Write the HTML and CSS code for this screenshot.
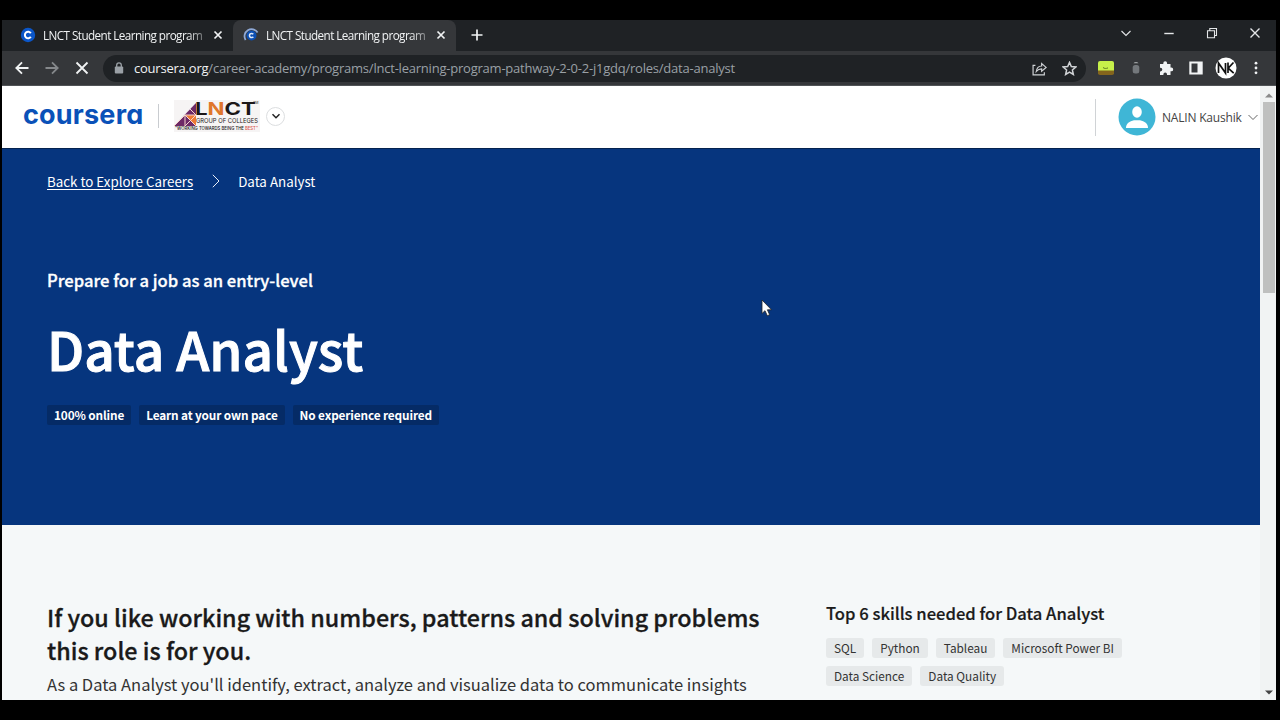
FILE: index.html
```
<!DOCTYPE html>
<html lang="en">
<head>
    <meta charset="UTF-8">
    <meta name="viewport" content="width=device-width, initial-scale=1.0">
    <title>LNCT Student Learning program</title>
    <link rel="stylesheet" href="styles.css">
</head>
<body>
    <div class="window">
        <div class="tab-strip">
            <div class="tab">
                <svg class="favicon" viewBox="0 0 16 16"><circle cx="8" cy="8" r="7.2" fill="#0b56c8"/><path d="M10.8 6.3A3.2 3.2 0 1 0 10.8 9.7" fill="none" stroke="#fff" stroke-width="2"/></svg>
                <span class="tab-title">LNCT Student Learning program</span>
                <svg class="tab-close" viewBox="0 0 10 10"><path d="M1.5 1.5l7 7M8.5 1.5l-7 7"/></svg>
            </div>
            <div class="tab active">
                <svg class="favicon" viewBox="0 0 16 16"><circle cx="8.5" cy="8.5" r="5" fill="#0b4fb4"/><path d="M10.3 7.3A2.1 2.1 0 1 0 10.3 9.7" fill="none" stroke="#dfe9f7" stroke-width="1.5"/><path d="M2.6 13A7 7 0 1 1 14.6 5.5" fill="none" stroke="#8fa9d6" stroke-width="1.8"/></svg>
                <span class="tab-title">LNCT Student Learning program</span>
                <svg class="tab-close" viewBox="0 0 10 10"><path d="M1.5 1.5l7 7M8.5 1.5l-7 7"/></svg>
            </div>
            <svg class="new-tab" viewBox="0 0 12 12"><path d="M6 .5v11M.5 6h11"/></svg>
            <div class="window-controls">
                <svg viewBox="0 0 12 12"><path d="M1.5 4L6 8.5 10.5 4"/></svg>
                <svg viewBox="0 0 12 12"><path d="M1.3 6.5h9.4" stroke-width="1.4"/></svg>
                <svg viewBox="0 0 12 12"><path d="M1.5 3.8h7v7h-7zM3.8 3.5V1.5h6.7v7H8.7"/></svg>
                <svg viewBox="0 0 12 12"><path d="M1.5 1.5l9 9M10.5 1.5l-9 9" stroke-width="1.4"/></svg>
            </div>
        </div>

        <div class="toolbar">
            <div class="nav-buttons">
                <svg viewBox="0 0 14 14"><path d="M13.5 7H1.5M7 1.3L1.3 7 7 12.7"/></svg>
                <svg class="disabled" viewBox="0 0 14 14"><path d="M.5 7h12M7 1.3L12.7 7 7 12.7"/></svg>
                <svg viewBox="0 0 14 14"><path d="M1.5 1.5l11 11M12.5 1.5l-11 11"/></svg>
            </div>
            <div class="address-bar">
                <svg class="lock" viewBox="0 0 10 12"><rect x=".8" y="4.5" width="8.4" height="7" rx="1" fill="#9aa0a6"/><path d="M2.7 5V3.2a2.3 2.3 0 0 1 4.6 0V5" fill="none" stroke="#9aa0a6" stroke-width="1.3"/></svg>
                <span class="url"><b>coursera.org</b>/career-academy/programs/lnct-learning-program-pathway-2-0-2-j1gdq/roles/data-analyst</span>
                <svg class="share" viewBox="0 0 14 14"><path d="M3.2 4H1v9h10.5v-2.5M4 9.8c.5-3.5 2.3-5 5-5.1V2.3L13.2 6 9 9.5V7.3C6.7 7.3 5.2 8.3 4 9.8z"/></svg>
                <svg class="star" viewBox="0 0 14 14"><path d="M7 1.3l1.7 3.9 4.2.4-3.2 2.8.9 4.2L7 10.4l-3.600 2.200.9-4.200L1.100 5.600l4.200-.4z"/></svg>
            </div>
            <div class="extensions">
                <svg viewBox="0 0 16 16"><rect x="0" y="1" width="16" height="13" rx="2" fill="#c6f04a"/><path d="M0 10.5h16V13a2 2 0 0 1-2 2H2a2 2 0 0 1-2-2z" fill="#85651c"/><path d="M5 7.5c1.5 1.2 3 1.2 5 .4" fill="none" stroke="#5d7920"/></svg>
                <svg viewBox="0 0 16 16"><rect x="4.7" y="5" width="6.6" height="8.5" rx="2.5" fill="#74787c"/><path d="M5.5 3.3a3 3 0 0 1 5 0z" fill="#a3a6a9"/></svg>
                <svg viewBox="0 0 16 16"><path fill="#f1f3f4" d="M2 4h3.3V3.2a1.9 1.9 0 0 1 3.8 0V4h3.4v3.5h.8a1.9 1.9 0 0 1 0 3.8h-.8V15H9v-.8a1.8 1.8 0 0 0-3.6 0v.8H2v-3.6h.5a1.8 1.8 0 0 0 0-3.6H2z"/></svg>
                <svg viewBox="0 0 16 16"><path fill="#f1f3f4" fill-rule="evenodd" d="M1.3 1.5h13.4v13H1.3zM3.5 3.5v9h6v-9z"/></svg>
                <svg class="profile" viewBox="0 0 22 22"><circle cx="11" cy="11" r="10.5" fill="#fff"/><path d="M3.5 16V6l7 10V6M13 5.5V16M18.5 5.5l-5.3 5.7 5.5 5" fill="none" stroke="#111" stroke-width="1.7"/></svg>
                <svg viewBox="0 0 16 16"><g fill="#f1f3f4"><circle cx="8" cy="3.2" r="1.4"/><circle cx="8" cy="8" r="1.4"/><circle cx="8" cy="12.8" r="1.4"/></g></svg>
            </div>
        </div>

        <div class="viewport">
            <div class="page">
                <header class="site-header">
                    <span class="brand">coursera</span>
                    <div class="partner">
                        <svg class="lnct-logo" viewBox="0 0 86 34">
                            <rect width="86" height="32" y="1" fill="#f6f4f4"/>
                            <path d="M0 27L22 4v23z" fill="#6e2a66"/>
                            <path d="M11 16l11 11V16z" fill="#ee7b35"/>
                            <path d="M11 16v11M0 27L11 16h11M11 27l11-11M11 16l11 11M16 10l6 6" fill="none" stroke="#f6d5cf" stroke-width="1"/>
                            <text class="lnct-name" x="21" y="16" textLength="61" lengthAdjust="spacingAndGlyphs">L<tspan fill="#e0762b">N</tspan>CT</text>
                            <text class="lnct-group" x="22" y="24.2" textLength="62" lengthAdjust="spacingAndGlyphs">GROUP OF COLLEGES</text>
                            <text class="lnct-motto" x="1" y="31" textLength="83" lengthAdjust="spacingAndGlyphs">"WORKING TOWARDS BEING THE <tspan fill="#d9534a">BEST"</tspan></text>
                            <text class="lnct-tm" x="79" y="4.5">TM</text>
                        </svg>
                        <span class="switcher"><svg viewBox="0 0 10 10"><path d="M1.5 3.2L5 6.7l3.5-3.5"/></svg></span>
                    </div>
                    <div class="account">
                        <svg class="avatar" viewBox="0 0 38 38"><circle cx="19" cy="19" r="18.5" fill="#3fb6d6"/><ellipse cx="19" cy="14" rx="4.8" ry="5.8" fill="#fff"/><path d="M8 30c0-5 3.5-6.5 8-7.8h6c4.5 1.3 8 2.8 8 7.8z" fill="#fff"/></svg>
                        <span class="account-name">NALIN Kaushik</span>
                        <svg class="caret" viewBox="0 0 10 10"><path d="M.5 3L5 7.5 9.5 3"/></svg>
                    </div>
                </header>

                <section class="hero">
                    <nav class="breadcrumb">
                        <a href="#">Back to Explore Careers</a>
                        <svg viewBox="0 0 8 14"><path d="M.8.8L7 7 .8 13.2"/></svg>
                        <span>Data Analyst</span>
                    </nav>
                    <p class="eyebrow">Prepare for a job as an entry-level</p>
                    <h1>Data Analyst</h1>
                    <div class="badges">
                        <span>100% online</span>
                        <span>Learn at your own pace</span>
                        <span>No experience required</span>
                    </div>
                </section>

                <section class="overview">
                    <div class="intro">
                        <h2>If you like working with numbers, patterns and solving problems<br>this role is for you.</h2>
                        <p>As a Data Analyst you'll identify, extract, analyze and visualize data to communicate insights</p>
                    </div>
                    <div class="skills">
                        <h3>Top 6 skills needed for Data Analyst</h3>
                        <div class="skill-list">
                            <span>SQL</span>
                            <span>Python</span>
                            <span>Tableau</span>
                            <span>Microsoft Power BI</span>
                            <span>Data Science</span>
                            <span>Data Quality</span>
                        </div>
                    </div>
                </section>
            </div>
            <div class="scrollbar">
                <svg viewBox="0 0 8 5"><path d="M0 4.5L4 .5l4 4z" fill="#8a8a8a"/></svg>
                <div class="thumb"></div>
                <svg class="down" viewBox="0 0 8 5"><path d="M0 .5h8l-4 4z" fill="#444"/></svg>
            </div>
        </div>
    </div>
    <svg class="cursor" viewBox="0 0 12 18"><path d="M1 1v13.5l3-2.8 2.3 5 2.3-1-2.2-4.9H10.5z" fill="#fff" stroke="#222" stroke-width=".8"/></svg>
</body>
</html>
```

FILE: styles.css
```
* {
    box-sizing: border-box;
}
body {
    margin: 0;
    padding: 20px 4px 20px 2px;
    height: 720px;
    overflow: hidden;
    background-color: #000;
    font-family: "Noto Sans CJK SC", sans-serif;
}
svg {
    display: block;
    flex: none;
}
.window {
    display: flex;
    flex-direction: column;
    height: 680px;
    overflow: hidden;
}

/* browser chrome */
.tab-strip {
    display: flex;
    align-items: center;
    height: 31px;
    flex: none;
    background-color: #1f2225;
    font-family: "Open Sans", sans-serif;
}
.tab {
    display: flex;
    align-items: center;
    width: 231px;
    height: 31px;
    padding: 0 0 2px 18px;
}
.tab.active {
    width: 223px;
    padding-left: 10px;
    background-color: #35373a;
    border-radius: 8px 8px 0 0;
}
.favicon {
    width: 16px;
    height: 16px;
    margin-right: 7px;
}
.tab-title {
    width: 160px;
    white-space: nowrap;
    color: #f1f3f4;
    font-size: 11.7px;
    letter-spacing: -0.56px;
    -webkit-mask-image: linear-gradient(to right, #000 90%, rgba(0, 0, 0, 0.4) 100%);
}
.tab-close {
    width: 10px;
    height: 10px;
    margin-left: 10px;
    fill: none;
    stroke: #f1f3f4;
    stroke-width: 1.7;
}
.new-tab {
    width: 12px;
    height: 12px;
    margin: -1px 0 0 15px;
    fill: none;
    stroke: #f1f3f4;
    stroke-width: 1.7;
}
.window-controls {
    display: flex;
    gap: 31px;
    margin: -5px 15px 0 auto;
}
.window-controls svg {
    width: 12px;
    height: 12px;
    fill: none;
    stroke: #e4e6e8;
    stroke-width: 1.1;
}
.toolbar {
    display: flex;
    align-items: center;
    height: 35px;
    flex: none;
    padding: 0 12px 0 13px;
    background-color: #35373a;
    border-bottom: 1px solid #505356;
}
.nav-buttons {
    display: flex;
    gap: 16px;
}
.nav-buttons svg {
    width: 14px;
    height: 14px;
    fill: none;
    stroke: #f1f3f4;
    stroke-width: 1.8;
}
.nav-buttons .disabled {
    stroke: #85888b;
}
.address-bar {
    display: flex;
    align-items: center;
    width: 983px;
    height: 27px;
    margin-left: 14px;
    padding: 0 9px 0 11px;
    border-radius: 14px;
    background-color: #1f2225;
}
.lock {
    width: 10px;
    height: 12px;
}
.url {
    margin-left: 10px;
    color: #9aa0a6;
    font-family: "Open Sans", sans-serif;
    font-size: 13px;
    letter-spacing: -0.22px;
    white-space: nowrap;
}
.url b {
    color: #f1f3f4;
    font-weight: 400;
}
.share,
.star {
    width: 15px;
    height: 15px;
    fill: none;
    stroke: #d0d3d6;
    stroke-width: 1.1;
}
.share {
    margin-left: auto;
}
.star {
    margin-left: 15px;
    stroke-width: 1.4;
}
.extensions {
    display: flex;
    align-items: center;
    justify-content: space-between;
    width: 166px;
    margin-left: auto;
}
.extensions svg {
    width: 16px;
    height: 16px;
}
.extensions .profile {
    width: 22px;
    height: 22px;
    margin: 0 -3px;
}

/* page */
.viewport {
    display: flex;
    flex: 1;
    min-height: 0;
}
.page {
    width: 1258px;
    overflow: hidden;
    background-color: #f5f8f9;
}
.site-header {
    display: flex;
    align-items: center;
    height: 62px;
    padding-left: 21px;
    background-color: #fff;
}
.brand {
    width: 121px;
    margin-top: -4px;
    color: #0a51b8;
    font-family: Inter, sans-serif;
    font-size: 27px;
    font-weight: 700;
    line-height: 30px;
    letter-spacing: 0.2px;
    font-feature-settings: "cv11";
}
.partner {
    display: flex;
    align-items: center;
    height: 24px;
    margin: -2px 0 0 14px;
    padding-left: 15px;
    border-left: 1px solid #c9ccd0;
}
.lnct-logo {
    width: 86px;
    height: 34px;
}
.lnct-logo text {
    font-family: Inter, sans-serif;
    fill: #1c1717;
}
.lnct-logo .lnct-name {
    font-size: 17px;
    font-weight: 700;
}
.lnct-logo .lnct-group {
    font-size: 6.8px;
    font-weight: 400;
}
.lnct-logo .lnct-motto {
    font-size: 4.5px;
    font-weight: 500;
}
.lnct-logo .lnct-tm {
    font-size: 3.5px;
}
.switcher {
    display: flex;
    align-items: center;
    justify-content: center;
    width: 19px;
    height: 19px;
    margin-left: 6px;
    border: 1px solid #dcdee0;
    border-radius: 50%;
}
.switcher svg {
    width: 10px;
    height: 10px;
    fill: none;
    stroke: #222;
    stroke-width: 1.5;
}
.account {
    display: flex;
    align-items: center;
    height: 37px;
    margin-left: auto;
    padding: 0 2px 0 22px;
    border-left: 1px solid #d0d3d6;
}
.avatar {
    width: 38px;
    height: 38px;
}
.account-name {
    width: 80px;
    margin-left: 6px;
    color: #444;
    font-family: "Open Sans", sans-serif;
    font-size: 12px;
    letter-spacing: -0.2px;
    white-space: nowrap;
}
.caret {
    width: 10px;
    height: 10px;
    margin-left: 6px;
    fill: none;
    stroke: #666;
}
.hero {
    height: 377px;
    padding: 22px 45px 0;
    background-color: #06357e;
    border-top: 1px solid #04224f;
    color: #fff;
}
.breadcrumb {
    display: flex;
    align-items: center;
    height: 20px;
    font-size: 13.35px;
}
.breadcrumb a {
    color: #fff;
    text-underline-offset: 2px;
}
.breadcrumb svg {
    width: 8px;
    height: 14px;
    margin: 0 18px 0 19px;
    fill: none;
    stroke: #e8eef8;
}
.eyebrow {
    margin: 77px 0 0;
    font-size: 16.6px;
    font-weight: 500;
    line-height: 24px;
    -webkit-text-stroke: 0.3px #fff;
}
h1 {
    margin: 20px 0 0;
    font-size: 53.2px;
    font-weight: 500;
    line-height: 72px;
    -webkit-text-stroke: 1px #fff;
}
.badges {
    display: flex;
    gap: 8px;
    margin-top: 21px;
}
.badges span {
    height: 20px;
    padding: 0 7px;
    border-radius: 2px;
    background-color: #052b66;
    font-size: 11.8px;
    font-weight: 700;
    line-height: 19px;
    letter-spacing: -0.13px;
}
.overview {
    display: flex;
    padding: 75px 45px 0;
    color: #1a1a1a;
}
.intro {
    width: 779px;
    white-space: nowrap;
}
h2 {
    margin: 1px 0 0;
    font-size: 23.3px;
    font-weight: 500;
    line-height: 33px;
    -webkit-text-stroke: 0.3px #1a1a1a;
}
.intro p {
    margin: 1px 0 0;
    font-size: 16.5px;
    line-height: 32px;
    color: #333;
}
.skills {
    width: 310px;
}
h3 {
    margin: 0;
    font-size: 16.6px;
    font-weight: 500;
    line-height: 26px;
    -webkit-text-stroke: 0.2px #1a1a1a;
}
.skill-list {
    display: flex;
    flex-wrap: wrap;
    gap: 8px;
    margin-top: 12px;
}
.skill-list span {
    height: 20px;
    padding: 0 8px;
    border-radius: 3px;
    background-color: #e6e9ea;
    color: #333;
    font-size: 11.8px;
    line-height: 20px;
}
.scrollbar {
    display: flex;
    flex-direction: column;
    align-items: center;
    width: 16px;
    padding: 7px 1px 5px 2px;
    background-color: #f1f3f3;
}
.scrollbar svg {
    width: 8px;
    height: 5px;
}
.thumb {
    width: 12px;
    height: 191px;
    margin-top: 4px;
    background-color: #bfc0bf;
}
.scrollbar .down {
    margin-top: auto;
}
.cursor {
    position: absolute;
    left: 761px;
    top: 299px;
    width: 12px;
    height: 18px;
}
```
